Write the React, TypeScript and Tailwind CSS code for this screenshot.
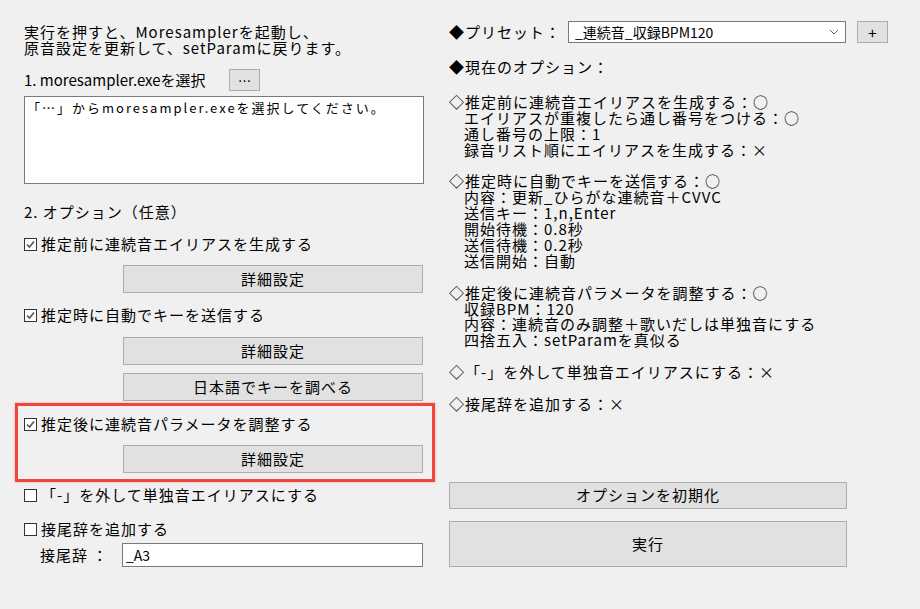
import React from "react";

const font = { fontFamily: '"Noto Sans CJK JP", "Noto Sans", sans-serif' };

function Check({ checked }: { checked: boolean }) {
  return (
    <svg width="13" height="13" viewBox="0 0 13 13" className="shrink-0">
      <rect x="0.5" y="0.5" width="12" height="12" fill="#ffffff" stroke="#333333" />
      {checked && (
        <polyline points="3,6.5 5.5,9 10,3.5" fill="none" stroke="#555555" strokeWidth="1.6" />
      )}
    </svg>
  );
}

function CheckRow({ checked, label, className = "" }: { checked: boolean; label: string; className?: string }) {
  return (
    <div className={`flex h-[16px] items-center gap-[4px] ${className}`}>
      <Check checked={checked} />
      <span className="whitespace-nowrap text-[15px] leading-[16px]">{label}</span>
    </div>
  );
}

function Btn({ label, className = "" }: { label: string; className?: string }) {
  return (
    <div
      className={`flex items-center justify-center border border-[#adadad] bg-[#e1e1e1] text-[15px] leading-[16px] text-black ${className}`}
    >
      {label}
    </div>
  );
}

export default function App() {
  const lines: { t: string; indent?: boolean }[] = [
    { t: "◇推定前に連続音エイリアスを生成する：○" },
    { t: "エイリアスが重複したら通し番号をつける：○", indent: true },
    { t: "通し番号の上限：1", indent: true },
    { t: "録音リスト順にエイリアスを生成する：×", indent: true },
    { t: "" },
    { t: "◇推定時に自動でキーを送信する：○" },
    { t: "内容：更新_ひらがな連続音＋CVVC", indent: true },
    { t: "送信キー：1,n,Enter", indent: true },
    { t: "開始待機：0.8秒", indent: true },
    { t: "送信待機：0.2秒", indent: true },
    { t: "送信開始：自動", indent: true },
    { t: "" },
    { t: "◇推定後に連続音パラメータを調整する：○" },
    { t: "収録BPM：120", indent: true },
    { t: "内容：連続音のみ調整＋歌いだしは単独音にする", indent: true },
    { t: "四捨五入：setParamを真似る", indent: true },
    { t: "" },
    { t: "◇「-」を外して単独音エイリアスにする：×" },
    { t: "" },
    { t: "◇接尾辞を追加する：×" },
  ];

  return (
    <div className="h-[609px] w-[920px] overflow-hidden bg-[#f0f0f0] tracking-[1px] text-black" style={font}>
      <div className="flex">
        {/* Left column */}
        <div className="ml-[24px] flex w-[400px] flex-col pt-[24px]">
          <div className="text-[15px] leading-[16px] whitespace-nowrap">
            <div>実行を押すと、Moresamplerを起動し、</div>
            <div>原音設定を更新して、setParamに戻ります。</div>
          </div>

          <div className="mt-[13px] flex h-[22px] items-center">
            <span className="w-[205px] whitespace-nowrap text-[15px] leading-[16px] tracking-normal">
              1. moresampler.exeを選択
            </span>
            <div className="flex h-[22px] w-[31px] items-center justify-center border border-[#adadad] bg-[#e1e1e1] text-[13px] leading-none tracking-normal">
              …
            </div>
          </div>

          <div className="mt-[5px] h-[88px] w-[400px] border border-[#7a7a7a] bg-white px-[2px] pt-[3px]">
            <div className="whitespace-nowrap text-[13px] leading-[16px] tracking-[2px]">
              「…」からmoresampler.exeを選択してください。
            </div>
          </div>

          <div className="mt-[20px] text-[15px] leading-[16px] whitespace-nowrap">2. オプション（任意）</div>

          <CheckRow checked label="推定前に連続音エイリアスを生成する" className="mt-[16px]" />
          <Btn label="詳細設定" className="ml-[99px] mt-[13px] h-[28px] w-[300px]" />

          <CheckRow checked label="推定時に自動でキーを送信する" className="mt-[14px]" />
          <Btn label="詳細設定" className="ml-[99px] mt-[14px] h-[28px] w-[300px]" />
          <Btn label="日本語でキーを調べる" className="ml-[99px] mt-[8px] h-[28px] w-[300px]" />

          <div className="-ml-[9px] -mr-[11px] mt-[2px] border-[3px] border-[#f2453d] pb-[6px] pl-[6px] pr-[8px] pt-[10px] shadow-[0_0_2px_rgba(242,69,61,0.5)]">
            <CheckRow checked label="推定後に連続音パラメータを調整する" />
            <Btn label="詳細設定" className="ml-[99px] mt-[13px] h-[28px] w-[300px]" />
          </div>

          <CheckRow checked={false} label="「-」を外して単独音エイリアスにする" className="mt-[5px]" />
          <CheckRow checked={false} label="接尾辞を追加する" className="mt-[18px]" />

          <div className="mt-[6px] flex h-[24px] items-center">
            <span className="ml-[16px] w-[82px] whitespace-nowrap text-[15px] leading-[16px]">接尾辞 ：</span>
            <div className="flex h-[24px] w-[301px] items-center border border-[#7a7a7a] bg-white px-[3px] text-[14px] leading-[16px] tracking-normal">
              _A3
            </div>
          </div>
        </div>

        {/* Right column */}
        <div className="ml-[25px] flex w-[440px] flex-col pt-[21px]">
          <div className="flex h-[22px] items-center">
            <span className="w-[119px] whitespace-nowrap text-[15px] leading-[16px]">◆プリセット：</span>
            <div className="flex h-[22px] w-[278px] items-center justify-between border border-[#7a7a7a] bg-white pl-[6px] pr-[6px]">
              <span className="whitespace-nowrap text-[14px] leading-[16px] tracking-normal">_連続音_収録BPM120</span>
              <svg width="10" height="6" viewBox="0 0 10 6">
                <polyline points="1,1 5,5 9,1" fill="none" stroke="#606060" strokeWidth="1" />
              </svg>
            </div>
            <div className="ml-[11px] flex h-[22px] w-[31px] items-center justify-center border border-[#adadad] bg-[#e1e1e1] text-[15px] leading-none tracking-normal">
              +
            </div>
          </div>

          <div className="mt-[16px] whitespace-nowrap text-[15px] leading-[16px]">◆現在のオプション：</div>

          <div className="mt-[19px] text-[15px] leading-[15.9px]">
            {lines.map((l, i) => (
              <div key={i} className={`h-[15.9px] whitespace-nowrap ${l.indent ? "pl-[15px]" : ""}`}>
                {l.t}
              </div>
            ))}
          </div>

          <Btn label="オプションを初期化" className="mt-[70px] h-[27px] w-[398px]" />
          <Btn label="実行" className="mt-[12px] h-[46px] w-[398px]" />
        </div>
      </div>
    </div>
  );
}
